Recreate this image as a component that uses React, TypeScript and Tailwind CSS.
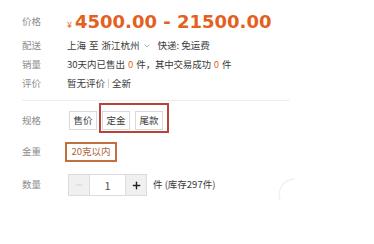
import { Plus, Minus } from "lucide-react";

const cjk = { fontFamily: '"Noto Sans CJK SC", "Noto Sans", sans-serif' };

function Row({ label, children, className = "" }: { label: string; children: React.ReactNode; className?: string }) {
  return (
    <div className={`flex items-center ${className}`}>
      <div className="w-[45px] shrink-0 text-[#8c8c8c]">{label}</div>
      <div className="flex items-center text-[#3a3a3a]">{children}</div>
    </div>
  );
}

export default function App() {
  return (
    <div className="relative h-[244px] w-[374px] overflow-hidden bg-white pl-[22px] pt-[8px] text-[9.5px] leading-none" style={cjk}>
      <Row label="价格" className="h-[28px]">
        <span className="mr-[3px] mt-[5px] text-[9px] text-[#e2611f]">¥</span>
        <span
          className="text-[18px] font-bold text-[#e2611f]"
          style={{ fontFamily: '"DejaVu Sans", sans-serif' }}
        >
          4500.00 - 21500.00
        </span>
      </Row>

      <Row label="配送" className="h-[19px]">
        <span>上海</span>
        <span className="ml-[3px]">至</span>
        <span className="ml-[3px]">浙江杭州</span>
        <svg className="ml-[4px] mt-[1px]" width="6" height="4" viewBox="0 0 6 4">
          <path d="M0.5 0.5 L3 3 L5.5 0.5" fill="none" stroke="#aaa" strokeWidth="0.9" />
        </svg>
        <span className="ml-[8px]">快递: 免运费</span>
      </Row>

      <Row label="销量" className="h-[19px]">
        <span>30天内已售出</span>
        <span className="mx-[3px] text-[#e2611f]">0</span>
        <span className="tracking-[-0.2px]">件，其中交易成功</span>
        <span className="mx-[3px] text-[#e2611f]">0</span>
        <span>件</span>
      </Row>

      <Row label="评价" className="h-[19px]">
        <span>暂无评价</span>
        <span className="mx-[3px] h-[9px] w-px bg-[#cfcfcf]" />
        <span>全新</span>
      </Row>

      <div className="mt-[7px] w-[268px] border-t border-[#eeeeee]" />

      <Row label="规格" className="mt-[10px] h-[19px]">
        <div className="ml-[2px] flex gap-[5px]">
          <div className="flex h-[19px] w-[28px] items-center justify-center border border-[#d9d9d9] bg-white">售价</div>
          <div className="relative flex gap-[5px]">
            <div className="flex h-[19px] w-[28px] items-center justify-center border border-[#d9d9d9] bg-white">定金</div>
            <div className="flex h-[19px] w-[28px] items-center justify-center border border-[#d9d9d9] bg-white">尾款</div>
            <div className="pointer-events-none absolute -bottom-[3px] -left-[3px] -right-[6px] -top-[8px] border-2 border-[#b8423c]" />
          </div>
        </div>
      </Row>

      <Row label="金重" className="mt-[12px] h-[20px]">
        <div className="-ml-[2px] flex h-[20px] w-[52px] items-center justify-center border-2 border-[#c0703f] text-[#b0653a]">
          20克以内
        </div>
      </Row>

      <Row label="数量" className="mt-[12px] h-[22px]">
        <div className="ml-[1px] flex h-[22px] border border-[#dcdcdc]">
          <div className="flex w-[20px] items-center justify-center bg-[#f0f0f0]">
            <Minus size={10} strokeWidth={1.5} color="#c4c4c4" />
          </div>
          <div className="flex w-[37px] items-center justify-center border-x border-[#dcdcdc] bg-white text-[11px] text-[#555]">1</div>
          <div className="flex w-[20px] items-center justify-center bg-[#f0f0f0]">
            <Plus size={11} strokeWidth={3} color="#222" />
          </div>
        </div>
        <span className="ml-[6px]">件 (库存297件)</span>
      </Row>

      <svg className="absolute left-[277px] top-[178px]" width="20" height="24" viewBox="0 0 20 24">
        <path d="M17 1 A 16 16 0 0 0 3 22" fill="none" stroke="#f0f0f0" strokeWidth="1.5" strokeLinecap="round" />
      </svg>
    </div>
  );
}
